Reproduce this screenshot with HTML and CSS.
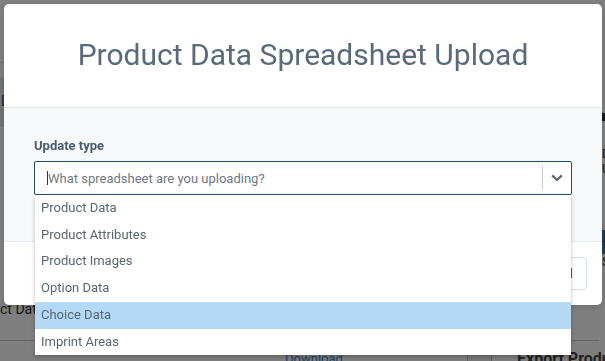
FILE: index.html
```html
<!DOCTYPE html>
<html>
<head>
  <meta charset="UTF-8"/>
  <title>Product Data Spreadsheet Upload</title>
  <link rel="stylesheet" href="styles.css">
</head>
<body>
<div class="page">
  <div class="page-main">
    <div class="page-top"></div>
    <div class="page-tabs"><span>Export</span></div>
    <div class="page-meta">
      <p>Uploaded</p>
      <p>Rows:</p>
    </div>
    <p class="page-name">Product Data</p>
    <div class="page-table">
      <span class="page-link">Download</span>
      <span class="page-col"></span>
      <span class="page-heading">Export Products</span>
    </div>
  </div>
  <div class="page-side">
    <span class="side-mark"></span>
    <p class="side-text">Download</p>
    <p class="side-text">Upload</p>
    <span class="side-button"></span>
    <p class="side-text">Save</p>
  </div>
</div>

<div class="backdrop">
  <div class="modal">
    <div class="modal-header">
      <h1 class="modal-title">Product Data Spreadsheet Upload</h1>
    </div>
    <div class="modal-body">
      <label class="field-label" for="updateType">Update type</label>
      <div class="select">
        <div class="select-control">
          <div class="select-value">
            <span class="select-caret"></span>
            <span class="select-placeholder">What spreadsheet are you uploading?</span>
          </div>
          <span class="select-separator"></span>
          <span class="select-indicator">
            <svg width="12" height="8" viewBox="0 0 12 8"><path d="M1.2 1.4 L6 6 L10.8 1.4" fill="none" stroke="#5d6670" stroke-width="2.2"/></svg>
          </span>
        </div>
        <ul class="select-menu" id="updateType">
          <li class="select-option">Product Data</li>
          <li class="select-option">Product Attributes</li>
          <li class="select-option">Product Images</li>
          <li class="select-option">Option Data</li>
          <li class="select-option is-focused">Choice Data</li>
          <li class="select-option">Imprint Areas</li>
        </ul>
      </div>
    </div>
    <div class="modal-footer">
      <button class="btn btn-primary" type="button">Upload</button>
      <button class="btn" type="button">Cancel</button>
    </div>
  </div>
</div>
</body>
</html>
```

FILE: styles.css
```css
body {
  margin: 0;
  font-family: Roboto, "Liberation Sans", sans-serif;
  overflow: hidden;
}

/* page behind the dialog */
.page {
  display: flex;
  width: 605px;
  height: 361px;
  overflow: hidden;
  background: #fff;
}
.page-main { width: 599px; flex-shrink: 0; }
.page-side { width: 120px; flex-shrink: 0; padding-top: 113px; }

.page-top {
  height: 62px;
  border-bottom: 1px solid #e2e2e2;
}
.page-tabs {
  margin-top: 14px;
  height: 48px;
  padding-left: 1px;
  background: #e4ebf1;
  border-bottom: 1px solid #d6d6d6;
  font-size: 14px;
  line-height: 48px;
  color: #24527d;
}
.page-meta {
  margin: 105px 0 0 -52px;
  font-size: 12px;
  line-height: 15px;
  color: #333;
}
.page-meta p { margin: 0; }
.page-name {
  margin: 40px 0 0 -37px;
  font-size: 14px;
  line-height: 16px;
  color: #333;
}
.page-table {
  display: flex;
  margin-top: 23px;
  height: 20px;
  border-top: 1px solid #c8c8c8;
  white-space: nowrap;
}
.page-link {
  flex-shrink: 0;
  margin: 11px 0 0 285px;
  width: 182px;
  font-size: 13px;
  line-height: 13px;
  color: #3f7fc0;
}
.page-col {
  flex-shrink: 0;
  width: 23px;
  border-left: 1px solid #c4c4c4;
  border-right: 1px solid #c4c4c4;
  background: #f2f2f2;
}
.page-heading {
  flex-shrink: 0;
  margin: 9px 0 0 25px;
  font-size: 16px;
  font-weight: 700;
  line-height: 18px;
  color: #444;
}
.side-mark {
  display: block;
  margin-left: 3px;
  width: 12px;
  height: 8px;
  background: #333;
}
.side-text {
  margin: 26px 0 0 3px;
  font-size: 13px;
  line-height: 13px;
  color: #333;
}
.side-text + .side-text { margin-top: 2px; }
.side-button {
  display: block;
  margin-top: 55px;
  height: 24px;
  background: #3a78ad;
}
.side-button + .side-text { margin-top: 1px; }

/* dialog */
.backdrop {
  position: fixed;
  inset: 0;
  background: rgba(0, 0, 0, 0.5);
  padding-top: 4px;
}
.modal {
  width: 598px;
  margin-left: 4px;
  background: #fff;
  border-radius: 5px;
  box-shadow: 0 2px 6px rgba(0, 0, 0, 0.15);
}
.modal-header {
  padding: 33px 0 35px;
  text-align: center;
  border-bottom: 1px solid #e3e8ed;
}
.modal-title {
  margin: 0;
  font-size: 30px;
  font-weight: 400;
  line-height: 35px;
  color: #596a7b;
}
.modal-body {
  padding: 30px 30px 46px;
  background: #f7f8fa;
}
.field-label {
  display: block;
  margin-bottom: 7px;
  font-size: 13px;
  font-weight: 700;
  line-height: 16px;
  color: #4b5b6b;
}

.select { position: relative; }
.select-control {
  display: flex;
  align-items: center;
  height: 34px;
  box-sizing: border-box;
  border: 1px solid #1f4b72;
  border-radius: 2px;
  background: #fff;
}
.select-value {
  flex: 1;
  display: flex;
  align-items: center;
  padding-left: 12px;
}
.select-caret {
  width: 1px;
  height: 14px;
  background: #333;
}
.select-placeholder {
  font-size: 13px;
  color: #6e7985;
}
.select-separator {
  width: 1px;
  height: 24px;
  background: #cfcfcf;
}
.select-indicator {
  display: flex;
  justify-content: center;
  width: 28px;
}
.select-menu {
  position: absolute;
  top: 100%;
  left: 1px;
  right: 1px;
  margin: 0;
  padding: 0;
  list-style: none;
  background: #fff;
  box-shadow: 0 2px 4px rgba(0, 0, 0, 0.25);
  z-index: 2;
}
.select-option {
  padding: 5px 6px;
  font-size: 13px;
  line-height: 16.7px;
  color: #5a6673;
}
.select-option.is-focused { background: #b3d9f5; }

.modal-footer {
  display: flex;
  justify-content: flex-end;
  gap: 8px;
  padding: 15px;
  border-top: 1px solid #e3e8ed;
}
.btn {
  height: 33px;
  padding: 0 13px;
  border: 1px solid #d3dde6;
  border-radius: 4px;
  background: #fff;
  font-family: inherit;
  font-size: 13px;
  color: #3d4b59;
}
.btn-primary {
  border-color: #1f4b72;
  background: #1f4b72;
  color: #fff;
}
```
